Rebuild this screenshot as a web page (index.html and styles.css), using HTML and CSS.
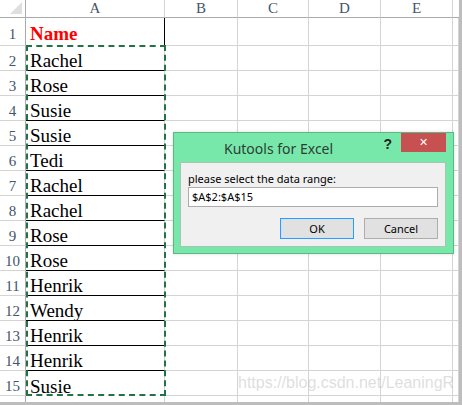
FILE: index.html
```html
<!DOCTYPE html>
<html>
<head>
<meta charset="utf-8">
<link rel="stylesheet" href="styles.css">
</head>
<body>
<div class="sheet">
  <div class="grid">
    <div class="hd corner"><span class="tri"></span></div>
    <div class="hd col">A</div>
    <div class="hd col">B</div>
    <div class="hd col">C</div>
    <div class="hd col">D</div>
    <div class="hd col">E</div>
    <div class="hd col rest"></div>

    <div class="rn r1">1</div><div class="c a name r1 first">Name</div><div class="c r1"></div><div class="c r1"></div><div class="c r1"></div><div class="c r1"></div><div class="c r1 rest"></div>
    <div class="rn">2</div><div class="c a">Rachel</div><div class="c"></div><div class="c"></div><div class="c"></div><div class="c"></div><div class="c rest"></div>
    <div class="rn">3</div><div class="c a">Rose</div><div class="c"></div><div class="c"></div><div class="c"></div><div class="c"></div><div class="c rest"></div>
    <div class="rn">4</div><div class="c a">Susie</div><div class="c"></div><div class="c"></div><div class="c"></div><div class="c"></div><div class="c rest"></div>
    <div class="rn">5</div><div class="c a">Susie</div><div class="c"></div><div class="c"></div><div class="c"></div><div class="c"></div><div class="c rest"></div>
    <div class="rn">6</div><div class="c a">Tedi</div><div class="c"></div><div class="c"></div><div class="c"></div><div class="c"></div><div class="c rest"></div>
    <div class="rn">7</div><div class="c a">Rachel</div><div class="c"></div><div class="c"></div><div class="c"></div><div class="c"></div><div class="c rest"></div>
    <div class="rn">8</div><div class="c a">Rachel</div><div class="c"></div><div class="c"></div><div class="c"></div><div class="c"></div><div class="c rest"></div>
    <div class="rn">9</div><div class="c a">Rose</div><div class="c"></div><div class="c"></div><div class="c"></div><div class="c"></div><div class="c rest"></div>
    <div class="rn">10</div><div class="c a">Rose</div><div class="c"></div><div class="c"></div><div class="c"></div><div class="c"></div><div class="c rest"></div>
    <div class="rn">11</div><div class="c a">Henrik</div><div class="c"></div><div class="c"></div><div class="c"></div><div class="c"></div><div class="c rest"></div>
    <div class="rn">12</div><div class="c a">Wendy</div><div class="c"></div><div class="c"></div><div class="c"></div><div class="c"></div><div class="c rest"></div>
    <div class="rn">13</div><div class="c a">Henrik</div><div class="c"></div><div class="c"></div><div class="c"></div><div class="c"></div><div class="c rest"></div>
    <div class="rn">14</div><div class="c a">Henrik</div><div class="c"></div><div class="c"></div><div class="c"></div><div class="c"></div><div class="c rest"></div>
    <div class="rn">15</div><div class="c a last">Susie</div><div class="c"></div><div class="c"></div><div class="c"></div><div class="c"></div><div class="c rest"></div>
    <div class="rn"></div><div class="c"></div><div class="c"></div><div class="c"></div><div class="c"></div><div class="c"></div><div class="c rest"></div>
  </div>

  <div class="selection"></div>

  <div class="dialog">
    <div class="titlebar">
      <div class="title">Kutools for Excel</div>
      <div class="help">?</div>
      <div class="close">✕</div>
    </div>
    <div class="panel">
      <div class="label">please select the data range:</div>
      <div class="input">$A$2:$A$15</div>
      <div class="buttons">
        <div class="btn ok">OK</div>
        <div class="btn">Cancel</div>
      </div>
    </div>
  </div>

  <div class="watermark">https://blog.csdn.net/LeaningR</div>
</div>
</body>
</html>
```

FILE: styles.css
```css
html, body {
  margin: 0;
  padding: 0;
}
body {
  width: 462px;
  height: 405px;
  background: #bdbdbd;
  overflow: hidden;
}
.sheet {
  position: relative;
  width: 459px;
  height: 402px;
  background: #ffffff;
  overflow: hidden;
}
.grid {
  display: grid;
  grid-template-columns: 26px 139px 73px 71px 72px 72px 6px;
  grid-template-rows: 18px 28px repeat(14, 25px) 25px;
}
.hd {
  box-sizing: border-box;
  border-bottom: 1px solid #ababab;
  border-right: 1px solid #d4d4d4;
  font-family: "Liberation Serif", serif;
  font-size: 15px;
  color: #44546a;
  display: flex;
  align-items: center;
  justify-content: center;
  line-height: 1;
}
.corner {
  border-right: 1px solid #ababab;
  position: relative;
}
.tri {
  position: absolute;
  right: 3px;
  bottom: 3px;
  width: 0;
  height: 0;
  border-left: 12px solid transparent;
  border-bottom: 12px solid #dfdfdf;
}
.rest {
  border-right: none;
}
.rn {
  box-sizing: border-box;
  border-right: 1px solid #ababab;
  border-bottom: 1px solid #d4d4d4;
  font-family: "Liberation Serif", serif;
  font-size: 15px;
  line-height: 1;
  color: #44546a;
  display: flex;
  align-items: flex-end;
  justify-content: center;
  padding-bottom: 1px;
}
.rn.r1 {
  padding-bottom: 3px;
}
.c {
  box-sizing: border-box;
  border-right: 1px solid #d4d4d4;
  border-bottom: 1px solid #d4d4d4;
}
.a {
  font-family: "Liberation Serif", serif;
  font-size: 19px;
  color: #000;
  padding-left: 4px;
  display: flex;
  align-items: flex-end;
  padding-bottom: 0;
  border-bottom: 1px solid #000;
  line-height: 1;
}
.name {
  color: #ff0000;
  font-weight: bold;
  border-right: 1px solid #000;
  border-bottom: none;
  padding-bottom: 3px;
}
.last {
  border-bottom: none;
}
.selection {
  position: absolute;
  left: 26px;
  top: 45px;
  width: 140px;
  height: 351px;
  box-sizing: border-box;
  border: 2px dashed #217346;
}
.dialog {
  position: absolute;
  left: 173px;
  top: 132px;
  width: 281px;
  height: 122px;
  box-sizing: border-box;
  background: #77e8aa;
  border: 1px solid #5cb886;
  box-shadow: 0 0 3px rgba(0,0,0,0.15);
  display: flex;
  flex-direction: column;
}
.titlebar {
  height: 29px;
  display: flex;
  align-items: flex-start;
  position: relative;
}
.title {
  font-family: "Noto Sans", sans-serif;
  font-size: 14px;
  color: #2d3e36;
  padding-left: 50px;
  padding-top: 6px;
  flex: 1;
}
.help {
  font-family: "Liberation Sans", sans-serif;
  font-weight: bold;
  font-size: 14px;
  color: #222;
  padding-top: 3px;
  margin-right: 9px;
}
.close {
  width: 45px;
  height: 19px;
  background: #c75050;
  color: #fff;
  font-family: "DejaVu Sans", sans-serif;
  font-size: 11px;
  font-weight: bold;
  display: flex;
  align-items: center;
  justify-content: center;
  margin-right: 7px;
}
.panel {
  margin: 0 7px 0 6px;
  height: 85px;
  box-sizing: border-box;
  background: #f0f0f0;
  border: 1px solid #a5c4b3;
  padding: 8px 7px 0 7px;
}
.label {
  font-family: "Noto Sans", sans-serif;
  font-size: 11px;
  color: #000;
  line-height: 15px;
}
.input {
  margin-top: 1px;
  height: 20px;
  box-sizing: border-box;
  background: #fff;
  border: 1px solid #acacac;
  font-family: "Noto Sans", sans-serif;
  font-size: 11px;
  line-height: 18px;
  padding-left: 3px;
}
.buttons {
  display: flex;
  justify-content: flex-end;
  gap: 10px;
  margin-top: 11px;
}
.btn {
  width: 74px;
  height: 21px;
  box-sizing: border-box;
  background: #e1e1e1;
  border: 1px solid #adadad;
  font-family: "Noto Sans", sans-serif;
  font-size: 11px;
  display: flex;
  align-items: center;
  justify-content: center;
}
.ok {
  border: 1px solid #3399ff;
  box-shadow: inset 0 0 0 1px #cce4f7;
}
.watermark {
  position: absolute;
  left: 238px;
  top: 374px;
  font-family: "Liberation Sans", sans-serif;
  font-size: 16px;
  color: rgba(190, 190, 190, 0.5);
  white-space: nowrap;
}
```
